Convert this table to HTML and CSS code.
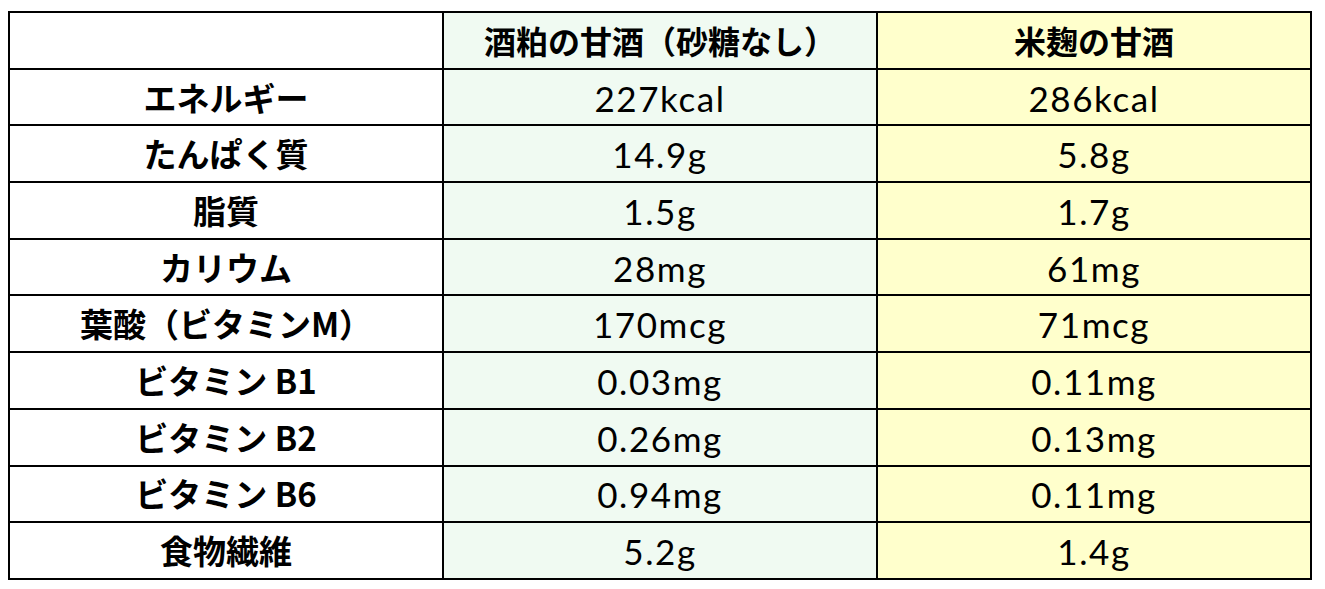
FILE: index.html
```html
<!DOCTYPE html>
<html lang="ja">
<head>
<meta charset="utf-8">
<title>酒粕の甘酒と米麹の甘酒の栄養比較</title>
<link rel="stylesheet" href="styles.css">
</head>
<body>
<table class="nutri">
  <thead>
    <tr>
      <th class="label"></th>
      <th class="col-sake">酒粕の甘酒（砂糖なし）</th>
      <th class="col-koji">米麹の甘酒</th>
    </tr>
  </thead>
  <tbody>
    <tr><th class="label">エネルギー</th><td class="col-sake">227kcal</td><td class="col-koji">286kcal</td></tr>
    <tr><th class="label">たんぱく質</th><td class="col-sake">14.9g</td><td class="col-koji">5.8g</td></tr>
    <tr><th class="label">脂質</th><td class="col-sake">1.5g</td><td class="col-koji">1.7g</td></tr>
    <tr><th class="label">カリウム</th><td class="col-sake">28mg</td><td class="col-koji">61mg</td></tr>
    <tr><th class="label">葉酸（ビタミンM）</th><td class="col-sake">170mcg</td><td class="col-koji">71mcg</td></tr>
    <tr><th class="label">ビタミン B1</th><td class="col-sake">0.03mg</td><td class="col-koji">0.11mg</td></tr>
    <tr><th class="label">ビタミン B2</th><td class="col-sake">0.26mg</td><td class="col-koji">0.13mg</td></tr>
    <tr><th class="label">ビタミン B6</th><td class="col-sake">0.94mg</td><td class="col-koji">0.11mg</td></tr>
    <tr><th class="label">食物繊維</th><td class="col-sake">5.2g</td><td class="col-koji">1.4g</td></tr>
  </tbody>
</table>
</body>
</html>
```

FILE: styles.css
```css
html, body {
  margin: 0;
  padding: 0;
  background: #ffffff;
}

body {
  padding: 11px 0 0 8px;
}

.nutri {
  border-collapse: collapse;
  width: 1304px;
  table-layout: fixed;
  color: #000;
}

.nutri tr {
  height: 56.7px;
}

.nutri th,
.nutri td {
  border: 2px solid #000;
  padding: 0;
  text-align: center;
  vertical-align: middle;
  width: 33.33%;
}

.nutri th {
  font-family: "Noto Sans CJK JP", "Liberation Sans", sans-serif;
  font-weight: 700;
  font-size: 32px;
  line-height: 1;
}

.nutri tbody th {
  font-size: 33px;
}

.nutri td {
  font-family: "Lato", "Liberation Sans", sans-serif;
  font-weight: 400;
  font-size: 35px;
  line-height: 1;
  letter-spacing: 1.6px;
  padding-top: 2px;
}

.label {
  background: #ffffff;
}

.col-sake {
  background: #f0faf2;
}

.col-koji {
  background: #ffffcc;
}
```
